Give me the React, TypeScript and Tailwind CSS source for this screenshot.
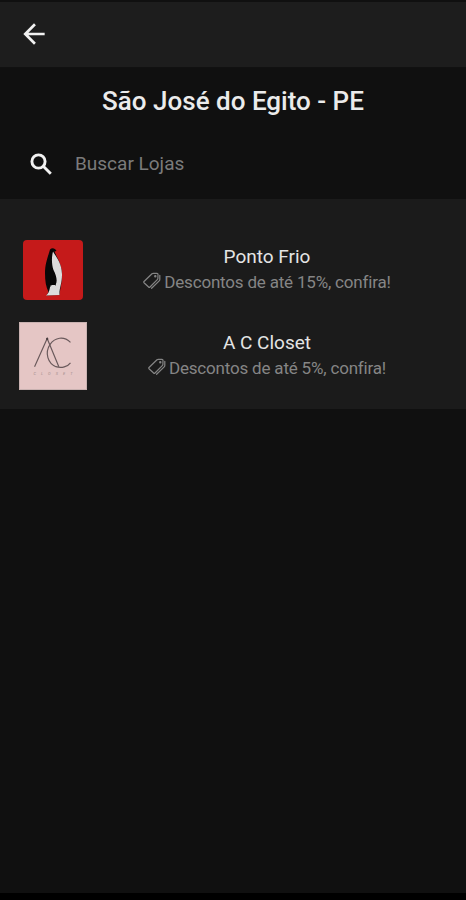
import type { ReactNode } from "react";
import { MdArrowBack } from "react-icons/md";

type StoreRowProps = {
  name: string;
  discount: string;
  logo: ReactNode;
};

function SearchIcon() {
  return (
    <svg
      viewBox="0 0 29 29"
      fill="none"
      stroke="#f1f1f1"
      strokeWidth="2.900"
      className="size-[29px] shrink-0"
    >
      <circle cx="11.500" cy="11.500" r="6.600" />
      <path d="M16.300 16.300L23.800 23.800" />
    </svg>
  );
}

function TagIcon() {
  return (
    <svg
      viewBox="0 0 18 18"
      fill="none"
      stroke="currentColor"
      strokeWidth="1.200"
      strokeLinejoin="round"
      strokeLinecap="round"
      className="mb-1 size-[18px] shrink-0"
    >
      <path d="M1 9.500L9 1.800Q9.500 1.300 10.300 1.300L14 1.300Q15 1.300 15 2.300L14.900 6.300Q14.900 7 14.300 7.600L7 15Q6.300 15.700 5.600 15L1 10.700Q.4 10.100 1 9.500Z" />
      <path d="M16.800 3.300V7.500Q16.800 8.200 16.200 8.800L8.600 16.300" />
      <circle cx="12.300" cy="4.200" r=".6" fill="currentColor" />
    </svg>
  );
}

function PenguinLogo() {
  return (
    <svg viewBox="0 0 60 60" className="size-[60px] rounded-[4px] bg-[#c51a1a]">
      <path
        d="M27 9.500C29 7.500 32 8 33.500 11L31.500 11.500C34 18 39 24 39 35C39 43 37 49 36.500 55L23.500 55.500L25.500 52C23 47 22 41 22 33C22 23 25 17 27 9.500Z"
        fill="#080808"
      />
      <path
        d="M30 11.500C33 17 38.500 22 39 34C39.200 43 36 49 36.500 55L23 55.500C26.500 53 26.500 49 27.500 45L32.500 45C35 41 33 35 30.500 30C28.500 24 28.500 17 30 11.500Z"
        fill="#dcdcdc"
      />
      <path d="M27 38L32.500 38L32.500 46L30 42.500L27.500 47Z" fill="#080808" />
    </svg>
  );
}

function ClosetLogo() {
  return (
    <svg viewBox="0 0 68 68" className="size-[68px] border border-[#c9b2b1] bg-[#e5c6c5]">
      <g fill="none" stroke="#69595b" strokeWidth="1.200">
        <path d="M15 45L28 16L40 45" />
        <path d="M52 20C45 13 36 15 31 22C25 31 29 42 37 45C43 47 49 45 52 41" />
      </g>
      <circle cx="28" cy="16.500" r="1.200" fill="#4a3e40" />
      <text
        x="14"
        y="53.500"
        fontSize="4"
        textLength="40"
        fill="#a28c8c"
        className="font-['Roboto',sans-serif] italic"
      >
        CLOSET
      </text>
    </svg>
  );
}

function StoreRow({ name, discount, logo }: StoreRowProps) {
  return (
    <li className="flex h-[86px] items-center">
      <div className="flex w-[106px] shrink-0 justify-center pb-0.5">{logo}</div>
      <div className="w-[322px] pb-0.5 text-center">
        <h2 className="text-[19px] leading-[26px] text-[#e4e4e4]">{name}</h2>
        <p className="flex h-[26px] items-center justify-center gap-[3px] text-[17px] tracking-[-0.19px] whitespace-nowrap text-[#858585]">
          <TagIcon />
          <span>{discount}</span>
        </p>
      </div>
    </li>
  );
}

export default function App() {
  return (
    <div className="flex h-[900px] w-[466px] flex-col overflow-hidden bg-[#101010] font-['Roboto',sans-serif]">
      <header className="flex h-[68px] shrink-0 items-center border-t-2 border-b border-t-[#101010] border-b-[#111111] bg-[#1d1d1d] pb-0.5 pl-[18px]">
        <button aria-label="Voltar">
          <MdArrowBack className="size-8 text-[#f1f1f1]" />
        </button>
      </header>

      <section className="h-[131px] shrink-0">
        <h1 className="pt-[15px] text-center text-[26px] leading-9 font-medium text-[#ebebeb]">
          São José do Egito - PE
        </h1>
        <label className="mx-2 mt-[17px] flex h-[56px] items-center pl-[19px]">
          <SearchIcon />
          <input
            type="text"
            placeholder="Buscar Lojas"
            className="ml-[19px] w-80 bg-transparent text-[19px] text-white outline-none placeholder:text-[#7b7b7b]"
          />
        </label>
      </section>

      <ul className="h-[210px] shrink-0 bg-[#1b1b1b] pt-[29px]">
        <StoreRow name="Ponto Frio" discount="Descontos de até 15%, confira!" logo={<PenguinLogo />} />
        <StoreRow name="A C Closet" discount="Descontos de até 5%, confira!" logo={<ClosetLogo />} />
      </ul>

      <footer className="mt-auto h-[7px] shrink-0 bg-black" />
    </div>
  );
}
